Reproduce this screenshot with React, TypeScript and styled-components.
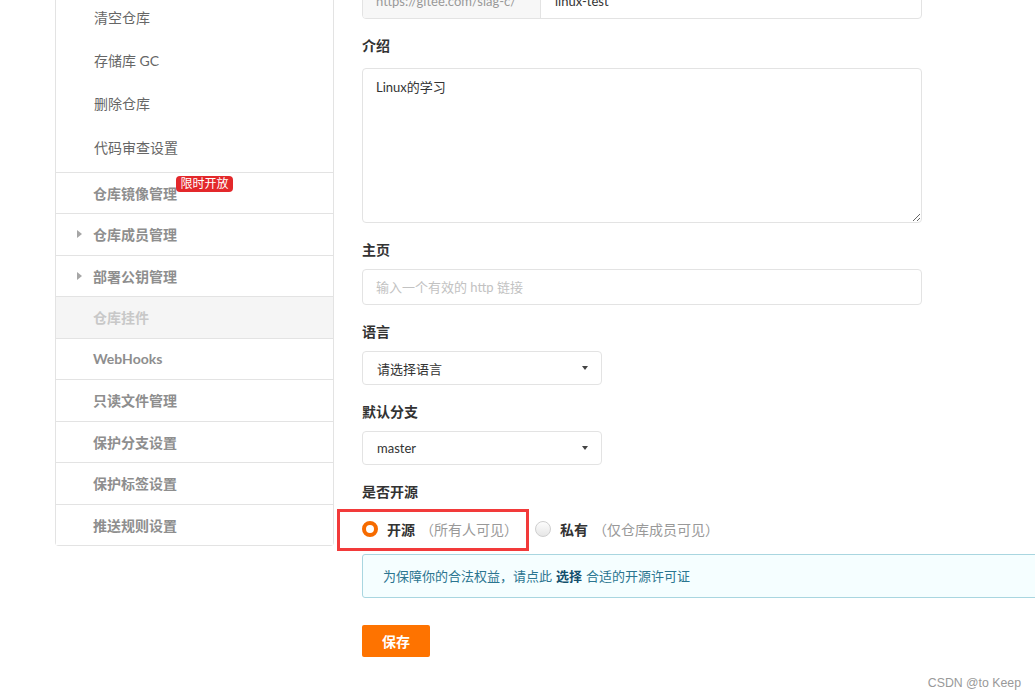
import React from "react";
import styled, { createGlobalStyle } from "styled-components";

const Global = createGlobalStyle`
  html, body { margin: 0; padding: 0; background: #fff; overflow: hidden; }
  body { font-family: Lato, "Noto Sans CJK SC", sans-serif; color: #333; }
  * { box-sizing: border-box; }
`;

const Page = styled.div`
  position: relative;
  width: 1035px;
  height: 699px;
  overflow: hidden;
  display: flex;
  align-items: flex-start;
  gap: 28px;
  padding-left: 55px;
`;

/* ---------- Sidebar ---------- */
const Sidebar = styled.nav`
  width: 279px;
  flex: none;
  margin-top: -5px;
  border: 1px solid #e3e3e3;
  border-top: none;
  border-radius: 0 0 4px 4px;
  background: #fff;
`;

const TopGroup = styled.div`
  padding-bottom: 3.5px;
`;

const TopItem = styled.div`
  height: 43.3px;
  display: flex;
  align-items: center;
  padding-left: 38px;
  font-size: 14px;
  color: #666;
`;

const Row = styled.div<{ $active?: boolean }>`
  height: 41.5px;
  border-top: 1px solid #e3e3e3;
  display: flex;
  align-items: center;
  padding-left: 20px;
  font-size: 14px;
  font-weight: 700;
  color: ${(p) => (p.$active ? "#c8c8c8" : "#8e8e8e")};
  background: ${(p) => (p.$active ? "#f5f5f5" : "#fff")};
`;

const ArrowSlot = styled.span`
  width: 17px;
  flex: none;
  display: flex;
  align-items: center;
`;

const Arrow = styled.span`
  width: 0;
  height: 0;
  border-top: 4px solid transparent;
  border-bottom: 4px solid transparent;
  border-left: 5px solid #a6a6a6;
  margin-left: 1px;
`;

const RowLabel = styled.span`
  position: relative;
`;

const Badge = styled.span`
  position: absolute;
  left: calc(100% - 1px);
  top: -7px;
  white-space: nowrap;
  background: #e3282b;
  color: #fff;
  font-size: 12px;
  font-weight: 400;
  line-height: 16px;
  padding: 0 4.5px;
  border-radius: 4px;
`;

/* ---------- Main form ---------- */
const Main = styled.main`
  width: 560px;
  flex: none;
  margin-top: -17px;
  display: flex;
  flex-direction: column;
  gap: 16.5px;
`;

const Field = styled.div`
  display: flex;
  flex-direction: column;
`;

const Label = styled.div`
  font-size: 14px;
  font-weight: 700;
  color: #333;
  line-height: 20px;
  margin-bottom: 9.5px;
`;

const InputGroup = styled.div`
  display: flex;
  height: 36px;
  border: 1px solid #e3e3e3;
  border-radius: 4px;
  overflow: hidden;
  font-size: 13px;
`;

const Addon = styled.div`
  width: 178px;
  flex: none;
  background: #f7f7f7;
  border-right: 1px solid #e3e3e3;
  color: #999;
  display: flex;
  align-items: center;
  padding-left: 13px;
`;

const GroupText = styled.div`
  flex: 1;
  display: flex;
  align-items: center;
  padding-left: 14px;
  color: #333;
`;

const TextArea = styled.textarea`
  display: block;
  margin-top: 3px;
  width: 560px;
  height: 155px;
  border: 1px solid #e3e3e3;
  border-radius: 4px;
  padding: 9px 13px;
  font-family: Lato, "Noto Sans CJK SC", sans-serif;
  font-size: 13px;
  line-height: 18px;
  color: #333;
  resize: vertical;
  outline: none;
`;

const TextInput = styled.input`
  display: block;
  width: 560px;
  height: 36px;
  border: 1px solid #e3e3e3;
  border-radius: 4px;
  padding: 0 13px;
  font-family: Lato, "Noto Sans CJK SC", sans-serif;
  font-size: 13px;
  color: #333;
  outline: none;
  &::placeholder { color: #c2c2c2; }
`;

const Select = styled.div`
  width: 240px;
  height: 34px;
  border: 1px solid #e3e3e3;
  border-radius: 4px;
  display: flex;
  align-items: center;
  justify-content: space-between;
  padding: 0 13px 0 14px;
  font-size: 13px;
  color: #333;
`;

const Caret = styled.span`
  width: 0;
  height: 0;
  border-left: 3.5px solid transparent;
  border-right: 3.5px solid transparent;
  border-top: 4px solid #444;
`;

const RadioRow = styled.div`
  position: relative;
  display: flex;
  align-items: center;
  height: 20px;
  margin-top: 8px;
  gap: 17px;
`;

const RadioOption = styled.label`
  display: flex;
  align-items: center;
  gap: 9px;
  font-size: 14px;
`;

const RadioDot = styled.span<{ $checked?: boolean }>`
  width: 16px;
  height: 16px;
  border-radius: 50%;
  flex: none;
  background: ${(p) => (p.$checked ? "#fff" : "linear-gradient(#fdfdfd, #e6e6e6)")};
  border: ${(p) => (p.$checked ? "4.5px solid #f66b00" : "1px solid #cfcfcf")};
`;

const RadioName = styled.span`
  font-weight: 700;
  color: #333;
`;

const RadioHint = styled.span`
  color: #999;
  font-weight: 400;
  margin-left: -4px;
`;

const Highlight = styled.div`
  position: absolute;
  left: -25px;
  top: -10.5px;
  width: 192px;
  height: 42px;
  border: 3px solid #f23a3a;
  pointer-events: none;
`;

const Notice = styled.div`
  width: 720px;
  height: 44px;
  margin-top: -2px;
  background: #f5feff;
  border: 1px solid #a9d6e0;
  border-radius: 3px;
  display: flex;
  align-items: center;
  padding-left: 20px;
  font-size: 13px;
  color: #2b7590;
`;

const NoticeStrong = styled.b`
  color: #124f6c;
  margin: 0 4px;
`;

const SaveButton = styled.button`
  align-self: flex-start;
  margin-top: 11px;
  width: 68px;
  height: 32px;
  border: none;
  border-radius: 2px;
  background: #fe7300;
  color: #fff;
  font-family: Lato, "Noto Sans CJK SC", sans-serif;
  font-size: 14px;
  font-weight: 700;
  cursor: pointer;
`;

const Watermark = styled.div`
  position: absolute;
  right: 14px;
  bottom: 9px;
  font-family: "Liberation Sans", "Noto Sans CJK SC", sans-serif;
  font-size: 12.3px;
  color: #999;
`;

const topItems = ["清空仓库", "存储库 GC", "删除仓库", "代码审查设置"];

type RowDef = { label: string; arrow?: boolean; active?: boolean; badge?: string };
const rows: RowDef[] = [
  { label: "仓库镜像管理", badge: "限时开放" },
  { label: "仓库成员管理", arrow: true },
  { label: "部署公钥管理", arrow: true },
  { label: "仓库挂件", active: true },
  { label: "WebHooks" },
  { label: "只读文件管理" },
  { label: "保护分支设置" },
  { label: "保护标签设置" },
  { label: "推送规则设置" },
];

export default function App() {
  return (
    <>
      <Global />
      <Page>
        <Sidebar>
          <TopGroup>
            {topItems.map((t) => (
              <TopItem key={t}>{t}</TopItem>
            ))}
          </TopGroup>
          {rows.map((r) => (
            <Row key={r.label} $active={r.active}>
              <ArrowSlot>{r.arrow && <Arrow />}</ArrowSlot>
              <RowLabel>
                {r.label}
                {r.badge && <Badge>{r.badge}</Badge>}
              </RowLabel>
            </Row>
          ))}
        </Sidebar>

        <Main>
          <InputGroup>
            <Addon>https://gitee.com/slag-c/</Addon>
            <GroupText>linux-test</GroupText>
          </InputGroup>

          <Field>
            <Label>介绍</Label>
            <TextArea defaultValue="Linux的学习" />
          </Field>

          <Field>
            <Label>主页</Label>
            <TextInput placeholder="输入一个有效的 http 链接" />
          </Field>

          <Field>
            <Label>语言</Label>
            <Select>
              <span>请选择语言</span>
              <Caret />
            </Select>
          </Field>

          <Field>
            <Label>默认分支</Label>
            <Select>
              <span>master</span>
              <Caret />
            </Select>
          </Field>

          <Field>
            <Label>是否开源</Label>
            <RadioRow>
              <RadioOption>
                <RadioDot $checked />
                <RadioName>开源</RadioName>
                <RadioHint>（所有人可见）</RadioHint>
              </RadioOption>
              <RadioOption>
                <RadioDot />
                <RadioName>私有</RadioName>
                <RadioHint>（仅仓库成员可见）</RadioHint>
              </RadioOption>
              <Highlight />
            </RadioRow>
          </Field>

          <Notice>
            为保障你的合法权益，请点此<NoticeStrong>选择</NoticeStrong>合适的开源许可证
          </Notice>

          <SaveButton>保存</SaveButton>
        </Main>

        <Watermark>CSDN @to Keep</Watermark>
      </Page>
    </>
  );
}
